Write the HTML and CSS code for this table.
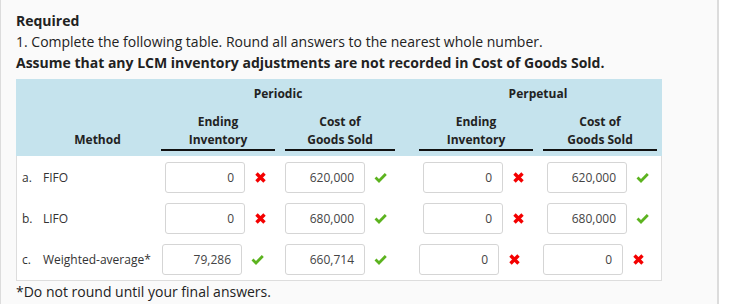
FILE: index.html
```html
<!DOCTYPE html>
<html>
<head>
<meta charset="utf-8">
<link rel="stylesheet" href="styles.css">
</head>
<body>
<div class="panel">
  <p class="line bold">Required</p>
  <p class="line">1. Complete the following table. Round all answers to the nearest whole number.</p>
  <p class="line bold">Assume that any LCM inventory adjustments are not recorded in Cost of Goods Sold.</p>

  <div class="table">
    <div class="head">
      <div class="group c-periodic">Periodic</div>
      <div class="group c-perpetual">Perpetual</div>
      <div class="hcell method-h">Method</div>
      <div class="hcell ul c-pe">Ending<br>Inventory</div>
      <div class="hcell ul c-pc">Cost of<br>Goods Sold</div>
      <div class="hcell ul c-ppe">Ending<br>Inventory</div>
      <div class="hcell ul c-ppc">Cost of<br>Goods Sold</div>
    </div>
    <div class="body">
      <div class="row">
        <div class="method"><span class="pre">a.</span>FIFO</div>
        <div class="cell c-pe in4"><span class="box">0</span><svg class="ico" viewBox="0 0 13 11"><path class="x" d="M2.5 1.5 L10.5 9.5 M10.5 1.5 L2.5 9.5"/></svg></div>
        <div class="cell c-pc"><span class="box">620,000</span><svg class="ico" viewBox="0 0 13 11"><path class="ok" d="M1.5 5.5 L5 9 L11.8 2"/></svg></div>
        <div class="cell c-ppe in4"><span class="box">0</span><svg class="ico" viewBox="0 0 13 11"><path class="x" d="M2.5 1.5 L10.5 9.5 M10.5 1.5 L2.5 9.5"/></svg></div>
        <div class="cell c-ppc in4"><span class="box">620,000</span><svg class="ico" viewBox="0 0 13 11"><path class="ok" d="M1.5 5.5 L5 9 L11.8 2"/></svg></div>
      </div>
      <div class="row">
        <div class="method"><span class="pre">b.</span>LIFO</div>
        <div class="cell c-pe in4"><span class="box">0</span><svg class="ico" viewBox="0 0 13 11"><path class="x" d="M2.5 1.5 L10.5 9.5 M10.5 1.5 L2.5 9.5"/></svg></div>
        <div class="cell c-pc"><span class="box">680,000</span><svg class="ico" viewBox="0 0 13 11"><path class="ok" d="M1.5 5.5 L5 9 L11.8 2"/></svg></div>
        <div class="cell c-ppe in4"><span class="box">0</span><svg class="ico" viewBox="0 0 13 11"><path class="x" d="M2.5 1.5 L10.5 9.5 M10.5 1.5 L2.5 9.5"/></svg></div>
        <div class="cell c-ppc in4"><span class="box">680,000</span><svg class="ico" viewBox="0 0 13 11"><path class="ok" d="M1.5 5.5 L5 9 L11.8 2"/></svg></div>
      </div>
      <div class="row">
        <div class="method"><span class="pre">c.</span>Weighted-average*</div>
        <div class="cell c-pe in1"><span class="box">79,286</span><svg class="ico" viewBox="0 0 13 11"><path class="ok" d="M1.5 5.5 L5 9 L11.8 2"/></svg></div>
        <div class="cell c-pc"><span class="box">660,714</span><svg class="ico" viewBox="0 0 13 11"><path class="ok" d="M1.5 5.5 L5 9 L11.8 2"/></svg></div>
        <div class="cell c-ppe"><span class="box">0</span><svg class="ico" viewBox="0 0 13 11"><path class="x" d="M2.5 1.5 L10.5 9.5 M10.5 1.5 L2.5 9.5"/></svg></div>
        <div class="cell c-ppc"><span class="box">0</span><svg class="ico" viewBox="0 0 13 11"><path class="x" d="M2.5 1.5 L10.5 9.5 M10.5 1.5 L2.5 9.5"/></svg></div>
      </div>
    </div>
  </div>
  <p class="note">*Do not round until your final answers.</p>
</div>
</body>
</html>
```

FILE: styles.css
```css
html, body {
  margin: 0;
  padding: 0;
  background: #ffffff;
}
body {
  font-family: "Open Sans", "DejaVu Sans", sans-serif;
  color: #222;
}
.panel {
  width: 719px;
  height: 304px;
  box-sizing: border-box;
  background: #fafafa;
  border-left: 1px solid #dcdcdc;
  border-right: 2px solid #dcdcdc;
  padding: 10px 0 0 15px;
}
.line {
  margin: 0;
  font-size: 14px;
  line-height: 21px;
}
.bold {
  font-weight: 700;
}
.table {
  width: 646px;
  margin-top: 6px;
}
.head,
.row {
  display: grid;
  grid-template-columns: 145px 114px 10px 110px 24px 114px 10px 114px;
}
.head {
  background: #c5e3ed;
  padding: 5px 5px 5px 0;
  height: 77px;
  box-sizing: border-box;
  font-weight: 700;
  font-size: 12px;
  color: #222;
}
.group {
  grid-row: 1;
  text-align: center;
  line-height: 18px;
  padding-top: 1px;
}
.c-periodic {
  grid-column: 2 / 5;
}
.c-perpetual {
  grid-column: 6 / 9;
}
.hcell {
  grid-row: 2;
  text-align: center;
  line-height: 18px;
  align-self: end;
}
.ul {
  border-bottom: 2px solid #111;
}
.method-h {
  grid-column: 1;
  padding-left: 18px;
  padding-bottom: 2px;
}
.c-pe {
  grid-column: 2;
}
.c-pc {
  grid-column: 4;
}
.c-ppe {
  grid-column: 6;
}
.c-ppc {
  grid-column: 8;
}
.body {
  background: #fff;
  border: 1px solid #ddd;
  border-top: none;
  padding: 6px 0 5px 0;
  display: flex;
  flex-direction: column;
  gap: 10px;
  box-sizing: border-box;
}
.row {
  align-items: center;
  height: 31px;
  margin-left: -1px;
}
.method {
  grid-column: 1;
  font-size: 12px;
  color: #333;
  padding-left: 6px;
  display: flex;
}
.pre {
  width: 21px;
  flex: none;
}
.cell {
  display: flex;
  align-items: center;
}
.in4 {
  padding-left: 4px;
}
.in1 {
  padding-left: 1px;
}
.box {
  flex: none;
  width: 80px;
  height: 31px;
  box-sizing: border-box;
  border: 1px solid #d5d5d5;
  border-radius: 3px;
  background: #fff;
  font-size: 12px;
  line-height: 29px;
  text-align: right;
  padding-right: 10px;
  color: #444;
}
.ico {
  flex: none;
  width: 13px;
  height: 11px;
  margin-left: 9px;
}
.x {
  stroke: #f40000;
  stroke-width: 3.4;
  fill: none;
}
.ok {
  stroke: #5cb31f;
  stroke-width: 2.8;
  fill: none;
}
.note {
  margin: 1px 0 0 0;
  font-size: 14px;
  line-height: 20px;
  color: #222;
}
```
